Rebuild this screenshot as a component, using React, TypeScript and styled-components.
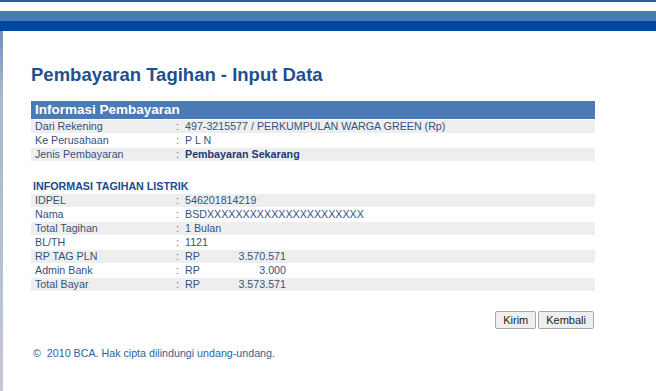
import React from "react";
import styled, { createGlobalStyle } from "styled-components";

const GlobalStyle = createGlobalStyle`
  html, body { margin: 0; padding: 0; background: #ffffff; }
  body { font-family: "Liberation Sans", Arial, sans-serif; }
  * { box-sizing: border-box; }
`;

const Page = styled.div`
  width: 656px;
  height: 391px;
  display: flex;
  flex-direction: column;
  overflow: hidden;
`;

const TopBar = styled.header`
  display: flex;
  flex-direction: column;
  flex: none;
`;

const Stripe = styled.div<{ $h: number; $c: string }>`
  height: ${(p) => p.$h}px;
  background: ${(p) => p.$c};
`;

const Body = styled.div`
  flex: 1;
  display: flex;
`;

const LeftEdge = styled.div`
  width: 3px;
  flex: none;
  background: linear-gradient(to bottom, #6f8fc0 0px, #a9b6cc 60px, #c4c8d0 100%);
`;

const Content = styled.main`
  padding: 33px 0 0 28px;
  display: flex;
  flex-direction: column;
`;

const Title = styled.h1`
  margin: 0;
  font-size: 18.5px;
  line-height: 21px;
  font-weight: bold;
  color: #1f4f8f;
`;

const Table = styled.section`
  width: 564px;
  display: flex;
  flex-direction: column;
  gap: 1px;
`;

const HeaderRow = styled.div`
  height: 18px;
  background: #4a7bb6;
  color: #ffffff;
  font-weight: bold;
  font-size: 13.5px;
  line-height: 18px;
  padding-left: 4px;
`;

const Row = styled.div<{ $shade?: boolean }>`
  height: 13px;
  display: grid;
  grid-template-columns: 143px 11px 1fr;
  align-items: center;
  background: ${(p) => (p.$shade ? "#eeeeee" : "#ffffff")};
  font-size: 10.7px;
  line-height: 13px;
  color: #34527f;
`;

const Label = styled.span`
  padding-left: 4px;
  white-space: nowrap;
`;

const Colon = styled.span`
  padding-left: 2px;
  color: #5a6f90;
`;

const Value = styled.span<{ $bold?: boolean }>`
  white-space: nowrap;
  font-weight: ${(p) => (p.$bold ? "bold" : "normal")};
  color: ${(p) => (p.$bold ? "#1c3a70" : "#34527f")};
`;

const Money = styled.span`
  width: 101px;
  display: flex;
  justify-content: space-between;
`;

const SectionTitle = styled.div`
  height: 13px;
  font-size: 10.7px;
  line-height: 13px;
  font-weight: bold;
  color: #1c4b8c;
  padding-left: 2px;
`;

const Spacer = styled.div<{ $h: number }>`
  height: ${(p) => p.$h}px;
`;

const Actions = styled.div`
  width: 564px;
  display: flex;
  justify-content: flex-end;
  gap: 2px;
  padding-right: 1px;
`;

const Button = styled.button`
  height: 18px;
  padding: 0 7px;
  border: 1px solid #a8a8a8;
  border-radius: 2px;
  background: #efefef;
  font-family: "Liberation Sans", Arial, sans-serif;
  font-size: 11px;
  line-height: 16px;
  color: #222222;
`;

const Footer = styled.footer`
  font-size: 10.7px;
  line-height: 13px;
  color: #2f5f9e;
  padding-left: 2px;
  white-space: pre;
`;

const info = [
  { label: "Dari Rekening", value: "497-3215577 / PERKUMPULAN WARGA GREEN (Rp)" },
  { label: "Ke Perusahaan", value: "P L N" },
  { label: "Jenis Pembayaran", value: "Pembayaran Sekarang", bold: true },
];

const bill: { label: string; value?: string; amount?: string }[] = [
  { label: "IDPEL", value: "546201814219" },
  { label: "Nama", value: "BSD" + "X".repeat(22) },
  { label: "Total Tagihan", value: "1 Bulan" },
  { label: "BL/TH", value: "1121" },
  { label: "RP TAG PLN", amount: "3.570.571" },
  { label: "Admin Bank", amount: "3.000" },
  { label: "Total Bayar", amount: "3.573.571" },
];

export default function App() {
  return (
    <Page>
      <GlobalStyle />
      <TopBar>
        <Stripe $h={2} $c="#2d5c9c" />
        <Stripe $h={9} $c="#ffffff" />
        <Stripe $h={10} $c="#4a7cb4" />
        <Stripe $h={10} $c="#0047a0" />
      </TopBar>
      <Body>
        <LeftEdge />
        <Content>
          <Title>Pembayaran Tagihan - Input Data</Title>
          <Spacer $h={16} />
          <Table>
            <HeaderRow>Informasi Pembayaran</HeaderRow>
            {info.map((r, i) => (
              <Row key={r.label} $shade={i % 2 === 0}>
                <Label>{r.label}</Label>
                <Colon>:</Colon>
                <Value $bold={r.bold}>{r.value}</Value>
              </Row>
            ))}
            <Spacer $h={17} />
            <SectionTitle>INFORMASI TAGIHAN LISTRIK</SectionTitle>
            {bill.map((r, i) => (
              <Row key={r.label} $shade={i % 2 === 0}>
                <Label>{r.label}</Label>
                <Colon>:</Colon>
                {r.amount ? (
                  <Money>
                    <Value>RP</Value>
                    <Value>{r.amount}</Value>
                  </Money>
                ) : (
                  <Value>{r.value}</Value>
                )}
              </Row>
            ))}
          </Table>
          <Spacer $h={20} />
          <Actions>
            <Button>Kirim</Button>
            <Button>Kembali</Button>
          </Actions>
          <Spacer $h={18} />
          <Footer>{"©  2010 BCA. Hak cipta dilindungi undang-undang."}</Footer>
        </Content>
      </Body>
    </Page>
  );
}
